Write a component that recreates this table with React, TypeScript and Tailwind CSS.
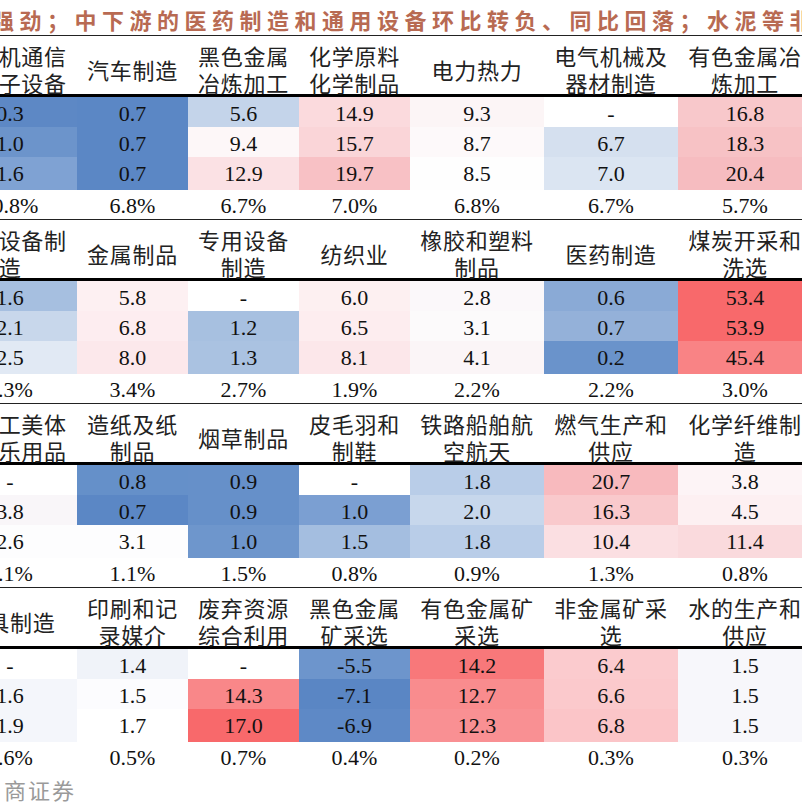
const COLS = "grid grid-cols-[134px_111px_111px_111px_134px_134px_134px]";

type Cell = { v: string; bg: string };
type Col = { name: string[]; vals: Cell[]; pct: string };

const c = (v: string, bg: string): Cell => ({ v, bg });

const blocks: Col[][] = [
  [
    { name: ["计算机通信", "和电子设备"], vals: [c("0.3", "bg-[#5d88c5]"), c("1.0", "bg-[#6c94cb]"), c("1.6", "bg-[#7fa2d3]")], pct: "10.8%" },
    { name: ["汽车制造"], vals: [c("0.7", "bg-[#5b87c5]"), c("0.7", "bg-[#5b87c5]"), c("0.7", "bg-[#5b87c5]")], pct: "6.8%" },
    { name: ["黑色金属", "冶炼加工"], vals: [c("5.6", "bg-[#c4d4ea]"), c("9.4", "bg-[#fdf7f8]"), c("12.9", "bg-[#fbe1e4]")], pct: "6.7%" },
    { name: ["化学原料", "化学制品"], vals: [c("14.9", "bg-[#fbdadd]"), c("15.7", "bg-[#fad5d8]"), c("19.7", "bg-[#f8c1c5]")], pct: "7.0%" },
    { name: ["电力热力"], vals: [c("9.3", "bg-[#fcf5f6]"), c("8.7", "bg-[#fdf9fa]"), c("8.5", "bg-[#fefefe]")], pct: "6.8%" },
    { name: ["电气机械及", "器材制造"], vals: [c("-", "bg-white"), c("6.7", "bg-[#d5e0ef]"), c("7.0", "bg-[#dbe5f2]")], pct: "6.7%" },
    { name: ["有色金属冶", "炼加工"], vals: [c("16.8", "bg-[#f8c8cb]"), c("18.3", "bg-[#f7c2c5]"), c("20.4", "bg-[#f6bcc0]")], pct: "5.7%" },
  ],
  [
    { name: ["通用设备制", "造"], vals: [c("1.6", "bg-[#a6bfe0]"), c("2.1", "bg-[#c8d7eb]"), c("2.5", "bg-[#e1e9f4]")], pct: "4.3%" },
    { name: ["金属制品"], vals: [c("5.8", "bg-[#fdf0f2]"), c("6.8", "bg-[#fdedf0]"), c("8.0", "bg-[#fce8eb]")], pct: "3.4%" },
    { name: ["专用设备", "制造"], vals: [c("-", "bg-white"), c("1.2", "bg-[#a7c0e0]"), c("1.3", "bg-[#aac2e1]")], pct: "2.7%" },
    { name: ["纺织业"], vals: [c("6.0", "bg-[#fdf0f1]"), c("6.5", "bg-[#fdedef]"), c("8.1", "bg-[#fce7ea]")], pct: "1.9%" },
    { name: ["橡胶和塑料", "制品"], vals: [c("2.8", "bg-[#fbf8fa]"), c("3.1", "bg-[#fcfafb]"), c("4.1", "bg-[#fbf5f7]")], pct: "2.2%" },
    { name: ["医药制造"], vals: [c("0.6", "bg-[#8aaad6]"), c("0.7", "bg-[#94b1d9]"), c("0.2", "bg-[#6a93cb]")], pct: "2.2%" },
    { name: ["煤炭开采和", "洗选"], vals: [c("53.4", "bg-[#f8696b]"), c("53.9", "bg-[#f8696b]"), c("45.4", "bg-[#f98385]")], pct: "3.0%" },
  ],
  [
    { name: ["文教工美体", "育娱乐用品"], vals: [c("-", "bg-white"), c("3.8", "bg-[#f9f6f9]"), c("2.6", "bg-[#fdfdfe]")], pct: "1.1%" },
    { name: ["造纸及纸", "制品"], vals: [c("0.8", "bg-[#6590c9]"), c("0.7", "bg-[#5b87c5]"), c("3.1", "bg-[#fdfdfe]")], pct: "1.1%" },
    { name: ["烟草制品"], vals: [c("0.9", "bg-[#6690c9]"), c("0.9", "bg-[#6690c9]"), c("1.0", "bg-[#6e96cc]")], pct: "1.5%" },
    { name: ["皮毛羽和", "制鞋"], vals: [c("-", "bg-white"), c("1.0", "bg-[#7b9fd2]"), c("1.5", "bg-[#a4bee0]")], pct: "0.8%" },
    { name: ["铁路船舶航", "空航天"], vals: [c("1.8", "bg-[#b9cde8]"), c("2.0", "bg-[#c7d7ec]"), c("1.8", "bg-[#b9cde8]")], pct: "0.9%" },
    { name: ["燃气生产和", "供应"], vals: [c("20.7", "bg-[#f8babe]"), c("16.3", "bg-[#f9c9cc]"), c("10.4", "bg-[#fbdfe2]")], pct: "1.3%" },
    { name: ["化学纤维制", "造"], vals: [c("3.8", "bg-[#fdf4f6]"), c("4.5", "bg-[#fdf0f2]"), c("11.4", "bg-[#fadadd]")], pct: "0.8%" },
  ],
  [
    { name: ["家具制造"], vals: [c("-", "bg-white"), c("1.6", "bg-[#f4f6fb]"), c("1.9", "bg-[#f4f6fb]")], pct: "0.6%" },
    { name: ["印刷和记", "录媒介"], vals: [c("1.4", "bg-[#f0f3f9]"), c("1.5", "bg-[#fcfcfe]"), c("1.7", "bg-white")], pct: "0.5%" },
    { name: ["废弃资源", "综合利用"], vals: [c("-", "bg-white"), c("14.3", "bg-[#f98789]"), c("17.0", "bg-[#f8696b]")], pct: "0.7%" },
    { name: ["黑色金属", "矿采选"], vals: [c("-5.5", "bg-[#6d95cc]"), c("-7.1", "bg-[#5a86c4]"), c("-6.9", "bg-[#5e89c6]")], pct: "0.4%" },
    { name: ["有色金属矿", "采选"], vals: [c("14.2", "bg-[#f8787a]"), c("12.7", "bg-[#f98c8e]"), c("12.3", "bg-[#f99093]")], pct: "0.2%" },
    { name: ["非金属矿采", "选"], vals: [c("6.4", "bg-[#fbcbce]"), c("6.6", "bg-[#fbc9cc]"), c("6.8", "bg-[#fbc5c8]")], pct: "0.3%" },
    { name: ["水的生产和", "供应"], vals: [c("1.5", "bg-[#f7f7fb]"), c("1.5", "bg-[#f7f7fb]"), c("1.5", "bg-[#f7f7fb]")], pct: "0.3%" },
  ],
];

const cjk = "font-['Noto_Sans_CJK_SC',sans-serif]";
const num = "font-['Liberation_Serif','Times_New_Roman',serif]";

const Block = ({ cols }: { cols: Col[] }) => (
  <div className="border-t border-[#222]">
    {/* header */}
    <div className={`${COLS} h-[61px] border-b-[3px] border-black`}>
      {cols.map((col, i) => (
        <div key={i} className={`flex flex-col items-center justify-center pt-[6px] text-[22px] leading-[27px] tracking-[0.7px] text-[#222] ${cjk}`}>
          {col.name.map((line, j) => (
            <span key={j} className="whitespace-nowrap">{line}</span>
          ))}
        </div>
      ))}
    </div>

    {/* values */}
    <div className="border-b-2 border-black">
      {[0, 1, 2].map((r) => (
        <div key={r} className={`${COLS} h-[30px]`}>
          {cols.map((col, i) => (
            <div key={i} className={`flex items-center justify-center text-[22px] text-[#111] ${num} ${col.vals[r].bg}`}>
              {col.vals[r].v}
            </div>
          ))}
        </div>
      ))}
    </div>

    {/* share */}
    <div className={`${COLS} h-[30px]`}>
      {cols.map((col, i) => (
        <div key={i} className={`flex items-center justify-center text-[22px] text-[#111] ${num}`}>
          {col.pct}
        </div>
      ))}
    </div>
  </div>
);

const App = () => {
  return (
    <div className="w-[802px] h-[802px] overflow-hidden bg-white">
      {/* title */}
      <div className="h-[35px] pt-[4px] flex items-center overflow-hidden">
        <span className={`ml-[-8px] whitespace-nowrap text-[22px] font-bold tracking-[5.5px] text-[#b86a52] ${cjk}`}>
          强劲；中下游的医药制造和通用设备环比转负、同比回落；水泥等非金属
        </span>
      </div>

      <div className="w-[869px] ml-[-57px]">
        {blocks.map((cols, i) => (
          <Block key={i} cols={cols} />
        ))}
      </div>

      {/* source */}
      <div className="h-[36px] flex items-center">
        <span className={`ml-[4px] whitespace-nowrap text-[22px] tracking-[2px] text-[#9a9a9a] ${cjk}`}>
          商证券
        </span>
      </div>
    </div>
  );
};

export default App;
